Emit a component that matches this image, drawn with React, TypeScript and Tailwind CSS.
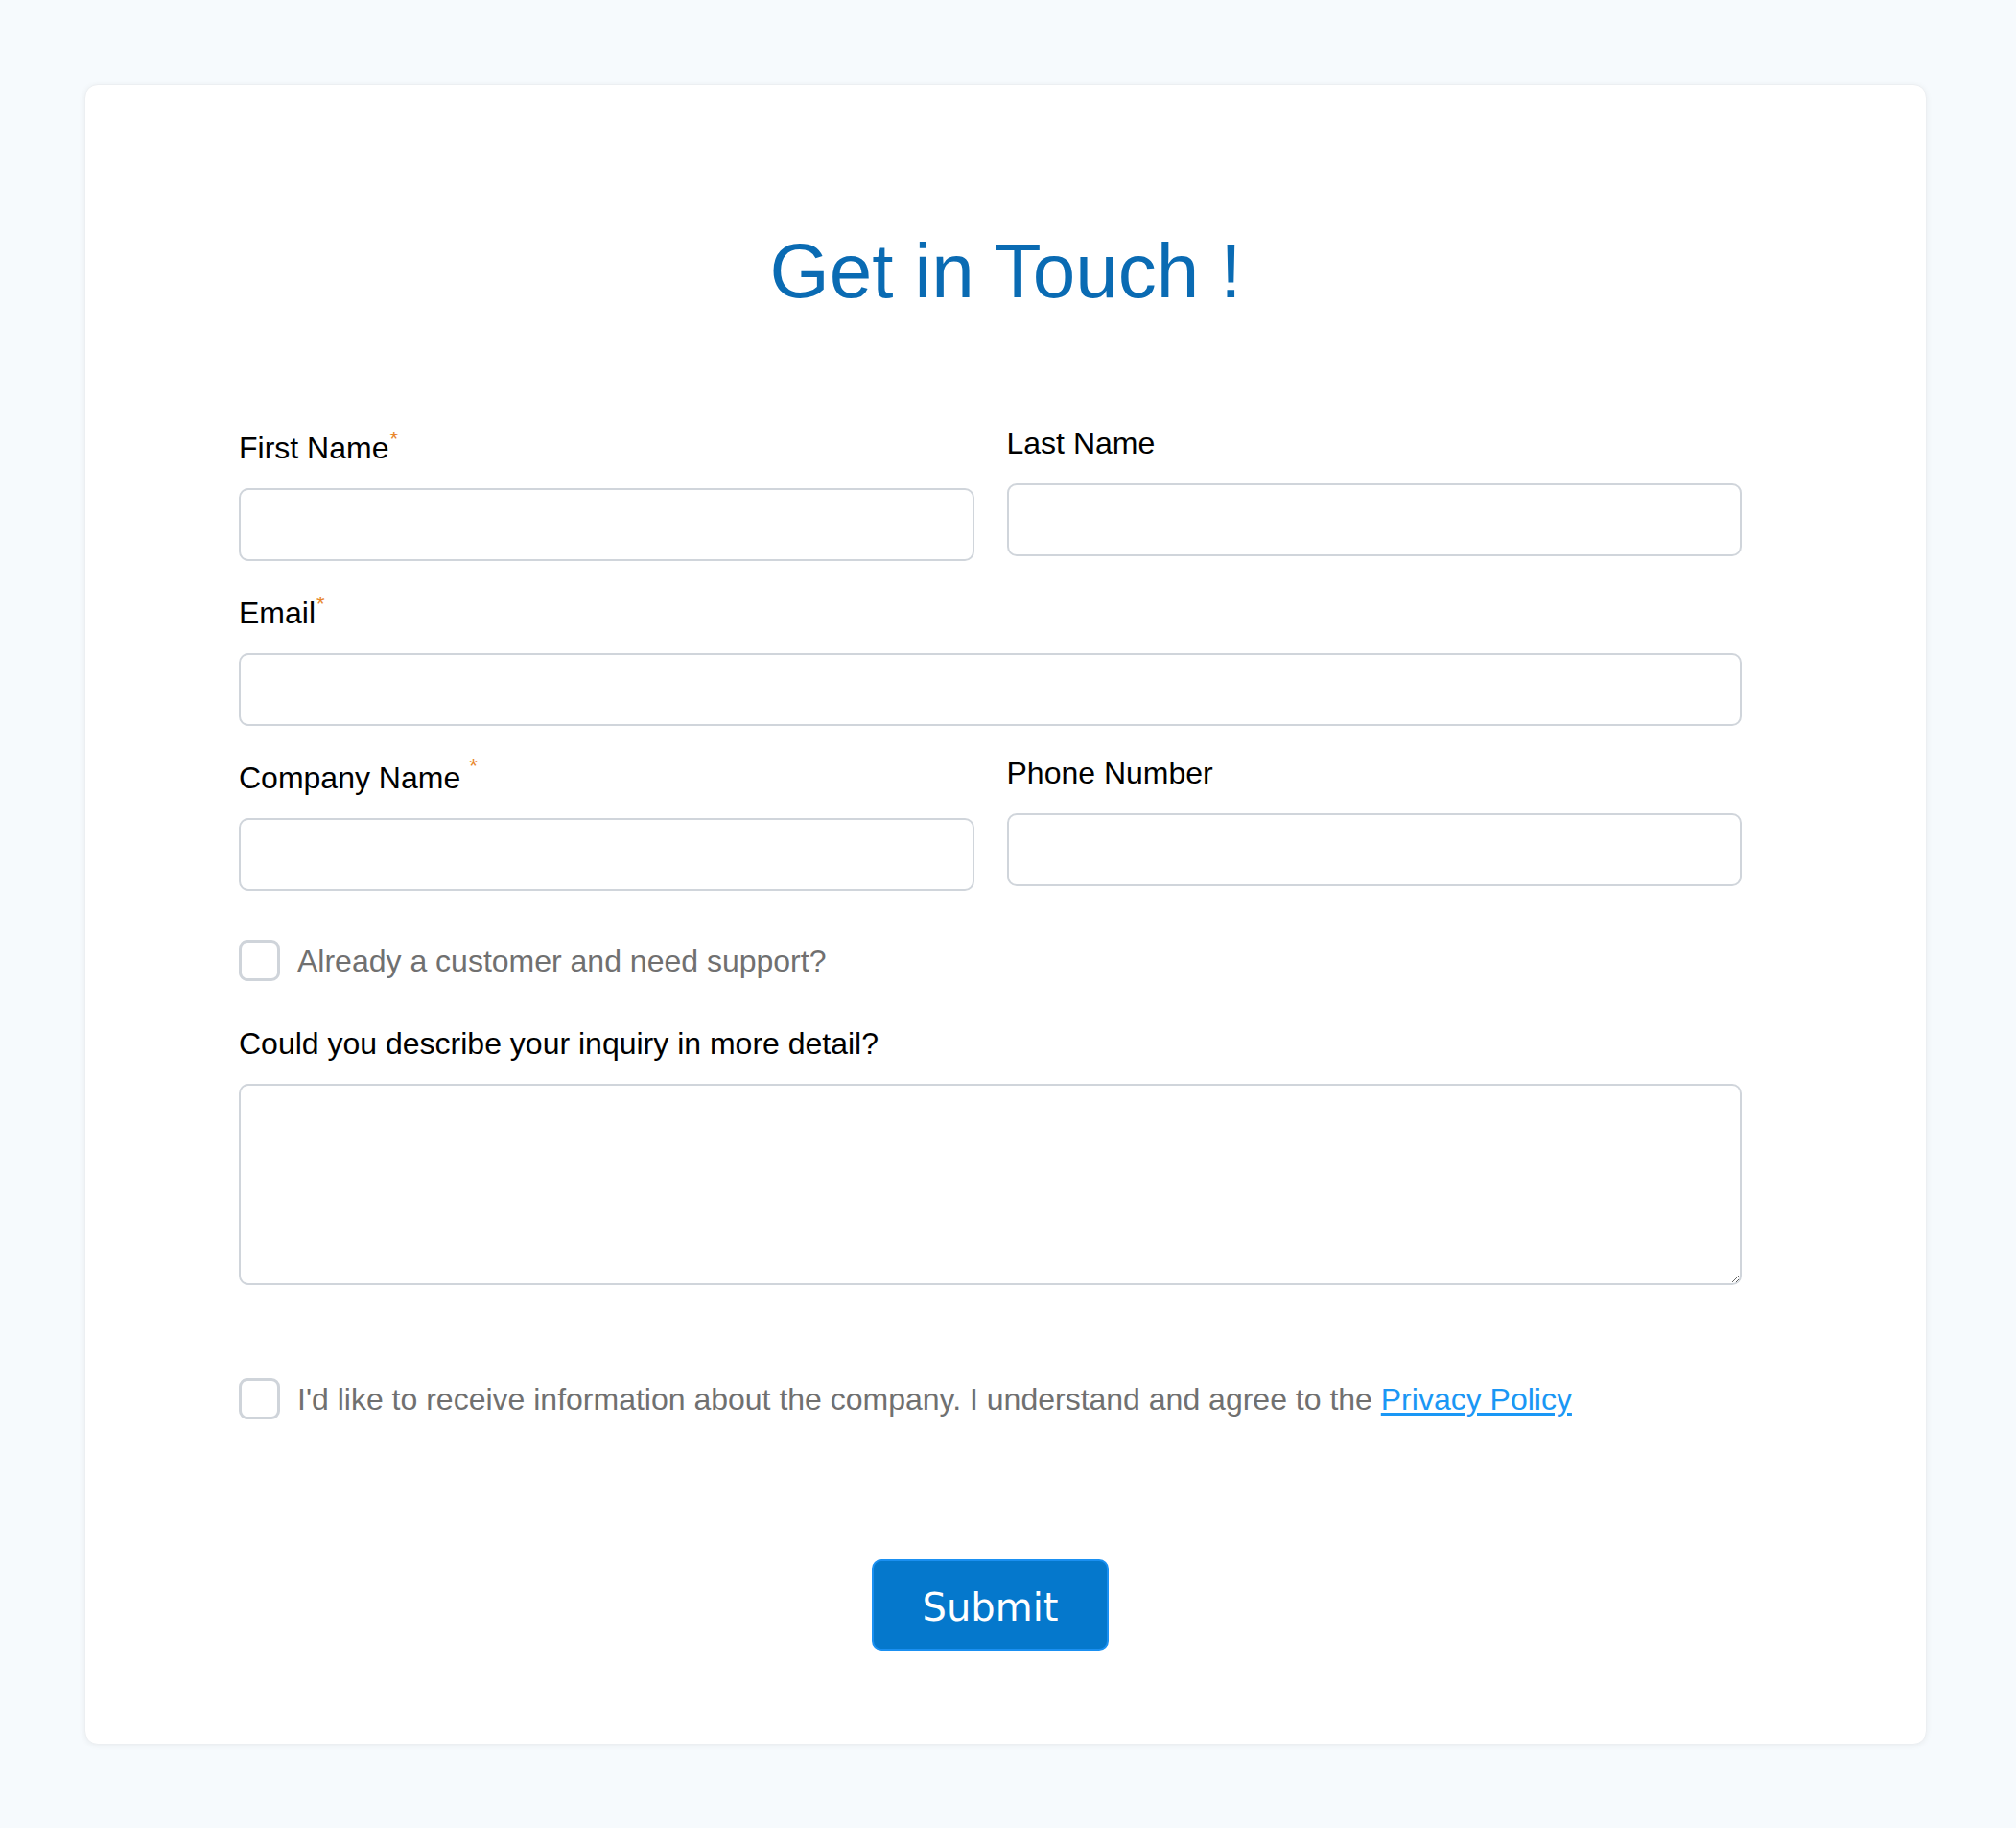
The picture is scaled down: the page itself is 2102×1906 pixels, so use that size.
import type { ReactNode } from 'react'

const sans = 'font-["Liberation_Sans",Arial,sans-serif]'

function Required({ spaced = false }: { spaced?: boolean }) {
  return (
    <span
      className={`relative inline-block text-[22px] leading-none text-[#e8862b] ${
        spaced ? 'ml-[9px] -top-[16px]' : 'ml-[1px] -top-[13px]'
      }`}
    >
      *
    </span>
  )
}

interface FieldProps {
  label: string
  required?: boolean
  spacedMark?: boolean
  wide?: boolean
}

function Field({ label, required, spacedMark, wide }: FieldProps) {
  return (
    <div className={`flex flex-col ${wide ? 'col-span-2' : ''}`}>
      <label className={`block text-[32px] leading-none text-black ${required ? 'pt-[5px]' : ''}`}>
        {label}
        {required ? <Required spaced={spacedMark} /> : null}
      </label>
      <input
        type="text"
        className="mt-[26px] h-[76px] w-full rounded-[10px] border-2 border-[#d0d5db] bg-white px-4 text-[28px] outline-none"
      />
    </div>
  )
}

function CheckRow({ children }: { children: ReactNode }) {
  return (
    <label className="flex items-center gap-[18px]">
      <span className="block h-[43px] w-[43px] shrink-0 rounded-[9px] border-[3px] border-[#cfd4da] bg-white" />
      <span className="text-[32px] leading-none text-[#707070]">{children}</span>
    </label>
  )
}

export default function App() {
  return (
    <div className={`min-h-[1906px] w-full bg-[#f6fafd] pt-[88px] ${sans}`}>
      <div className="ml-[88px] w-[1921px] rounded-[14px] border border-[#eceff2] bg-white pb-[97px] pt-[154px] shadow-[0_1px_6px_rgba(0,0,0,0.06)]">
        <h1 className="text-center text-[80px] font-normal leading-none text-[#0a6bb3]">
          Get in Touch !
        </h1>

        <form className="ml-[160px] mt-[123px] w-[1567px]" onSubmit={(e) => e.preventDefault()}>
          <div className="grid grid-cols-2 gap-x-[34px] gap-y-[33px]">
            <Field label="First Name" required />
            <Field label="Last Name" />
            <Field label="Email" required wide />
            <Field label="Company Name" required spacedMark />
            <Field label="Phone Number" />
          </div>

          <div className="mt-[51px]">
            <CheckRow>Already a customer and need support?</CheckRow>
          </div>

          <label className="mt-[49px] block text-[32px] leading-none text-black">
            Could you describe your inquiry in more detail?
          </label>
          <textarea className="mt-[26px] block h-[210px] w-full rounded-[10px] border-2 border-[#d0d5db] bg-white p-4 text-[28px] outline-none" />

          <div className="mt-[97px]">
            <CheckRow>
              I'd like to receive information about the company. I understand and agree to the{' '}
              <a href="#" className="text-[#1a97f5] underline underline-offset-[3px]">
                Privacy Policy
              </a>
            </CheckRow>
          </div>

          <div className="mt-[146px] flex justify-center">
            <button
              type="submit"
              className='flex h-[95px] w-[247px] items-center justify-center rounded-[10px] border-2 border-[#1a90f2] bg-[#0578cc] pt-[4px] font-["DejaVu_Sans",Verdana,sans-serif] text-[40px] text-white'
            >
              Submit
            </button>
          </div>
        </form>
      </div>
    </div>
  )
}
